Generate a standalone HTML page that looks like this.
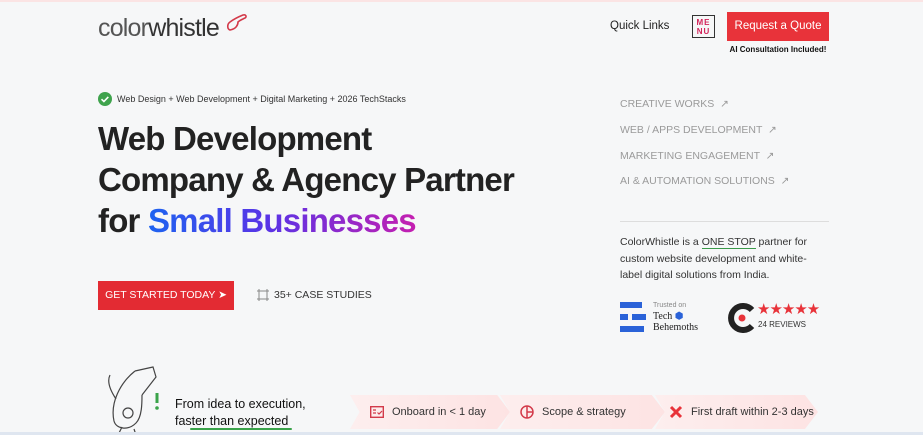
<!DOCTYPE html>
<html><head><meta charset="utf-8"><style>
*{margin:0;padding:0;box-sizing:border-box}
body{width:923px;height:435px;overflow:hidden;background:#f6f7f8;font-family:"Liberation Sans",sans-serif;color:#222;position:relative}
.a{position:absolute;white-space:nowrap}
h1{position:absolute;left:98px;top:118px;font-size:33px;line-height:41px;font-weight:bold;letter-spacing:-0.8px;color:#222}
.g{background:linear-gradient(90deg,#1d63f0,#5a33e6 45%,#c51fb0);-webkit-background-clip:text;background-clip:text;color:transparent}
.rl{position:absolute;left:620px;font-size:10.5px;color:#9a9a9a}
.chip{position:absolute;top:395px;height:34px;background:linear-gradient(90deg,#fdeeee,#fde3e3);clip-path:polygon(0 0,92% 0,100% 50%,92% 100%,0 100%,6% 50%);font-size:11px;color:#333;display:flex;align-items:center;padding-left:20px}
.chip svg{margin-right:8px}
</style></head><body>
<div class="a" style="left:0;top:0;width:923px;height:2px;background:#fbe4e4"></div>
<div class="a" style="left:98px;top:14px;font-size:25px;color:#333;letter-spacing:-0.8px"><span style="color:#555">color</span>whistle</div>
<svg class="a" style="left:226px;top:13px" width="22" height="20" viewBox="0 0 22 20"><path d="M4 17c-3-1-3-6 0-8 4-3 8-5 13-7 3-1 4 2 2 3-2 1-5 2-7 4 0 3-2 7-8 8z" fill="none" stroke="#d33a4a" stroke-width="1.6"/></svg>
<div class="a" style="left:610px;top:20px;font-size:11.5px;color:#222">Quick Links</div>
<div class="a" style="left:692px;top:15px;width:23px;height:23px;border:1.5px solid #333;font-size:8px;font-weight:bold;color:#d3245a;line-height:9px;text-align:center;padding-top:2px;letter-spacing:1px">ME<br>NU</div>
<div class="a" style="left:727px;top:12px;width:102px;height:29px;background:#e8333a;color:#fff;font-size:11.5px;text-align:center;line-height:29px">Request a Quote</div>
<div class="a" style="left:727px;top:45px;width:102px;text-align:center;font-size:8px;font-weight:bold;color:#111">AI Consultation Included!</div>
<svg class="a" style="left:98px;top:92px" width="14" height="14"><circle cx="7" cy="7" r="7" fill="#3fa34d"/><path d="M3.5 7.2l2.4 2.3 4.4-4.6" stroke="#fff" stroke-width="1.6" fill="none"/></svg>
<div class="a" style="left:117px;top:94px;font-size:9px;color:#333">Web Design + Web Development + Digital Marketing + 2026 TechStacks</div>
<h1>Web Development<br>Company &amp; Agency Partner<br>for <span class="g">Small Businesses</span></h1>
<div class="a" style="left:98px;top:281px;width:136px;height:29px;background:#e32b33;color:#fff;font-size:10.5px;line-height:29px;text-align:center">GET STARTED TODAY ➤</div>
<svg class="a" style="left:257px;top:289px" width="12" height="12"><g stroke="#888" fill="none"><rect x="2" y="2" width="8" height="8"/><path d="M0 2h2M0 10h2M10 2h2M10 10h2M2 0v2M10 0v2M2 10v2M10 10v2"/></g></svg>
<div class="a" style="left:274px;top:289px;font-size:10.5px;color:#333">35+ CASE STUDIES</div>
<div class="rl" style="top:98px">CREATIVE WORKS &nbsp;↗</div>
<div class="rl" style="top:124px">WEB / APPS DEVELOPMENT &nbsp;↗</div>
<div class="rl" style="top:150px">MARKETING ENGAGEMENT &nbsp;↗</div>
<div class="rl" style="top:175px">AI &amp; AUTOMATION SOLUTIONS &nbsp;↗</div>
<div class="a" style="left:620px;top:221px;width:209px;height:1px;background:#ddd"></div>
<div class="a" style="left:620px;top:234px;font-size:10.5px;line-height:16.5px;color:#333;white-space:normal;width:196px">ColorWhistle is a <span style="border-bottom:1.5px solid #3a9a4a">ONE STOP</span> partner for custom website development and white-label digital solutions from India.</div>
<svg class="a" style="left:620px;top:302px" width="28" height="30"><rect x="0" y="0" width="22" height="6" fill="#2a62d8"/><rect x="0" y="12" width="8" height="6" fill="#2a62d8"/><rect x="12" y="12" width="14" height="6" fill="#2a62d8"/><rect x="0" y="24" width="24" height="6" fill="#2a62d8"/></svg>
<div class="a" style="left:653px;top:302px;font-size:7px;color:#888">Trusted on</div>
<div class="a" style="left:653px;top:311px;font-size:10px;line-height:11px;font-family:'Liberation Serif',serif;color:#222">Tech <span style="color:#2a62d8">⬢</span><br>Behemoths</div>
<svg class="a" style="left:728px;top:303px" width="28" height="30"><path d="M24 7A12 12 0 1 0 24 23" stroke="#222" stroke-width="6" fill="none"/><circle cx="14" cy="15" r="3.5" fill="#e8333a"/></svg>
<div class="a" style="left:757px;top:300px;font-size:15px;color:#e8333a;letter-spacing:-1px">★★★★★</div>
<div class="a" style="left:758px;top:320px;font-size:8px;color:#333">24 REVIEWS</div>
<svg class="a" style="left:100px;top:363px" width="70" height="72" viewBox="0 0 70 72"><g fill="none" stroke="#444" stroke-width="1.2"><path d="M35 8l18-4 3 10-14 18"/><path d="M35 8C20 20 10 40 14 58c2 8 14 10 22 2 6-6 6-20 6-28"/><path d="M10 12c-4 8 2 18 6 24"/><circle cx="28" cy="50" r="5"/><path d="M22 64l-4 8M34 66l2 6"/></g><path d="M57 30v10" stroke="#3aa34a" stroke-width="3"/><circle cx="57" cy="45" r="1.8" fill="#3aa34a"/></svg>
<div class="a" style="left:175px;top:396px;font-size:12.5px;line-height:17px;color:#111">From idea to execution,<br>faster than expected</div>
<div class="a" style="left:190px;top:428px;width:102px;height:2px;background:#3aa34a;border-radius:2px"></div>
<div class="chip" style="left:350px;width:160px"><svg width="14" height="12"><rect x="0.7" y="0.7" width="12.6" height="10.6" fill="none" stroke="#d33a4a" stroke-width="1.4"/><path d="M3 4h3M3 7h3M7.5 6.5l1.5 1.5 3-3" stroke="#d33a4a" stroke-width="1.2" fill="none"/></svg>Onboard in &lt; 1 day</div>
<div class="chip" style="left:500px;width:165px"><svg width="14" height="14"><circle cx="7" cy="7" r="6" fill="none" stroke="#d33a4a" stroke-width="1.5"/><path d="M7 1v12M7 7h6" stroke="#d33a4a" stroke-width="1.5"/></svg>Scope &amp; strategy</div>
<div class="chip" style="left:655px;width:163px;padding-left:14px"><svg width="14" height="14"><path d="M2 2l10 10M12 2L2 12" stroke="#e8333a" stroke-width="3"/></svg>First draft within 2-3 days</div>
<div class="a" style="left:0;top:432px;width:923px;height:3px;background:#dfe6f0"></div>
</body></html>
